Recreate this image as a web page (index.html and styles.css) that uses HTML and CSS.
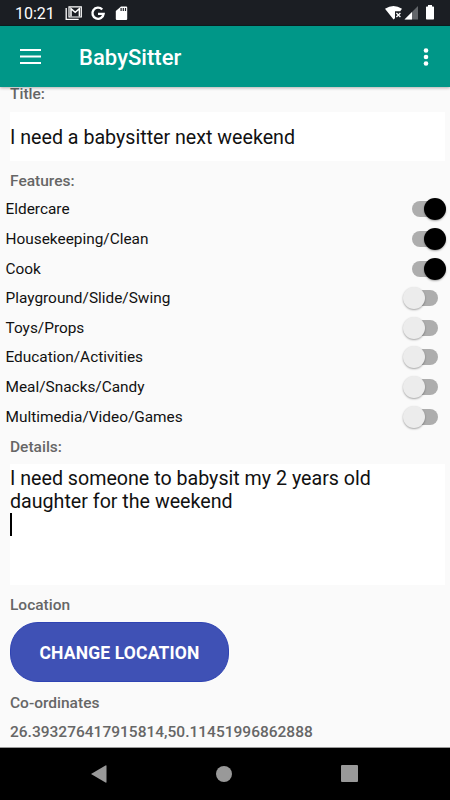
FILE: index.html
```
<!DOCTYPE html>
<html lang="en">
<head>
<meta charset="utf-8">
<title>BabySitter</title>
<link rel="stylesheet" href="styles.css">
</head>
<body>
<div class="screen">
  <header class="status">
    <span class="clock">10:21</span>
    <svg class="notifications" width="66" height="16" viewBox="0 0 66 16">
      <path d="M1.200 2v11.300h12.500" fill="none" stroke="#fff" stroke-width="1.300"/>
      <path d="M4 .9h12.300v10.100H4z" fill="none" stroke="#fff" stroke-width="1.200"/>
      <path d="M6 10.500V2.600l4.200 3.700 4.200-3.700v7.900" fill="none" stroke="#fff" stroke-width="1.500"/>
      <path d="M37.200 3.500a5.600 5.600 0 1 0 1.400 4.400H33" fill="none" stroke="#fff" stroke-width="2.400"/>
      <path fill-rule="evenodd" d="M56 .5h5.200q1 0 1 1v11.400q0 1-1 1h-9.400q-1 0-1-1V5zM55.500 2v3h1.200V2zm2.200 0v3h1.200V2zm2.200 0v3h1.200V2z" fill="#fff"/>
    </svg>
    <svg class="signals" width="50" height="16" viewBox="0 0 50 16">
      <path d="M0 3.800Q8.500-2 17 3.800l-1.800 2.400H10v7l-1.500 1.200z" fill="#fff"/>
      <path d="M11.400 8l4 4m0-4l-4 4" stroke="#fff" stroke-width="1.300"/>
      <path d="M33 1v13.500H19.500z" fill="#63666a"/>
      <path d="M27 7v7.500h-7.500z" fill="#fff"/>
      <path d="M43 0h4v1.500h1.300q.7 0 .7.7v11.600q0 .7-.7.7h-6.600q-.7 0-.7-.7V2.200q0-.7.7-.7H43z" fill="#fff"/>
    </svg>
  </header>
  <nav class="appbar">
    <svg width="22" height="16" viewBox="0 0 22 16"><path d="M0 1h21M0 7.500h21M0 14h21" stroke="#fff" stroke-width="2"/></svg>
    <h1>BabySitter</h1>
    <svg class="more" width="6" height="20" viewBox="0 0 6 20" fill="#fff"><circle cx="3" cy="3.500" r="2.300"/><circle cx="3" cy="10" r="2.300"/><circle cx="3" cy="16.500" r="2.300"/></svg>
  </nav>
  <main class="form">
    <h2 class="label title-label">Title:</h2>
    <div class="field title-field"><span>I need a babysitter next weekend</span></div>
    <h2 class="label features-label">Features:</h2>
    <ul class="features">
      <li><span>Eldercare</span><i class="switch on"></i></li>
      <li><span>Housekeeping/Clean</span><i class="switch on"></i></li>
      <li><span>Cook</span><i class="switch on"></i></li>
      <li><span>Playground/Slide/Swing</span><i class="switch"></i></li>
      <li><span>Toys/Props</span><i class="switch"></i></li>
      <li><span>Education/Activities</span><i class="switch"></i></li>
      <li><span>Meal/Snacks/Candy</span><i class="switch"></i></li>
      <li><span>Multimedia/Video/Games</span><i class="switch"></i></li>
    </ul>
    <h2 class="label details-label">Details:</h2>
    <div class="field details-field">
      <p>I need someone to babysit my 2 years old<br>daughter for the weekend</p>
      <div class="caret"></div>
    </div>
    <h2 class="label location-label">Location</h2>
    <button class="change">CHANGE LOCATION</button>
    <h2 class="label coord-label">Co-ordinates</h2>
    <div class="label coords">26.393276417915814,50.11451996862888</div>
  </main>
  <footer class="navbar">
    <svg width="16" height="18" viewBox="0 0 16 18"><path d="M0 9L14.500.5q1-.5 1 .5v16q0 1-1 .5z" fill="#999"/></svg>
    <svg width="16" height="16" viewBox="0 0 16 16"><circle cx="8" cy="8" r="8" fill="#999"/></svg>
    <svg width="17" height="17" viewBox="0 0 17 17"><rect width="17" height="17" rx="1" fill="#999"/></svg>
  </footer>
</div>
</body>
</html>
```
FILE: styles.css
```
* { box-sizing: border-box; }
body { margin: 0; font-family: Roboto, "Liberation Sans", sans-serif; color: #111; }
h1, h2, p, ul { margin: 0; padding: 0; }
svg { display: block; flex: none; }
.screen { width: 450px; height: 800px; display: flex; flex-direction: column; background: #fafafa; overflow: hidden; }
.status { height: 26px; flex: none; display: flex; align-items: flex-start; background: #1b1e23; border-bottom: 1px solid #0c1f20; padding: 5px 15px 0 15px; color: #fff; }
.clock { width: 50px; font-size: 16px; line-height: 18px; }
.notifications { margin-top: 1px; }
.signals { margin-left: auto; }
.appbar { height: 61px; flex: none; display: flex; align-items: center; padding: 0 21px 0 20px; background: #009788; box-shadow: 0 1px 3px rgba(0,0,0,.3); z-index: 1; }
.appbar h1 { margin: 3px 0 0 37px; color: #fff; font-size: 22px; line-height: 28px; font-weight: 500; letter-spacing: .05px; }
.more { margin-left: auto; }
.form { flex: 1; min-height: 0; display: flex; flex-direction: column; }
.label { margin-left: 10px; font-size: 15.5px; line-height: 18px; font-weight: 500; color: #666; flex: none; }
.title-label { margin-top: -2px; }
.field { margin: 0 5px 0 10px; background: #fff; font-size: 19.65px; line-height: 23px; flex: none; }
.title-field { height: 49px; margin-top: 9px; padding-top: 2px; display: flex; align-items: center; }
.features-label { margin-top: 11px; }
.features { list-style: none; margin-top: 4.6px; }
.features li { height: 29.6px; display: flex; align-items: center; justify-content: space-between; padding: 0 4px 0 5.5px; font-size: 15.4px; line-height: 18px; }
.switch { position: relative; width: 42px; height: 22px; }
.switch::before { content: ""; position: absolute; left: 8px; top: 3px; width: 26px; height: 16px; border-radius: 8px; background: #adadad; }
.switch::after { content: ""; position: absolute; left: -1px; top: 0; width: 22px; height: 22px; border-radius: 50%; background: #ececec; box-shadow: 0 1px 2px rgba(0,0,0,.35); }
.switch.on::after { left: 20px; background: #000; }
.details-label { margin-top: 6.6px; }
.details-field { height: 121px; margin-top: 8px; padding-top: 3px; }
.caret { width: 2px; height: 23px; background: #000; }
.location-label { margin-top: 11px; }
.change { width: 219px; height: 60px; margin: 8.4px 0 0 10px; padding: 2px 0 0; flex: none; border: 1px solid #2f43b3; border-radius: 28px; background: #3f51b5; color: #fff; font: 700 17.5px/20px Roboto, "Liberation Sans", sans-serif; letter-spacing: .15px; }
.coord-label { margin-top: 11.4px; }
.coords { margin-top: 11px; }
.navbar { height: 53px; flex: none; display: flex; align-items: center; justify-content: space-between; padding: 0 92px 1px 91px; background: #000; border-top: 1px solid #999; }
```
